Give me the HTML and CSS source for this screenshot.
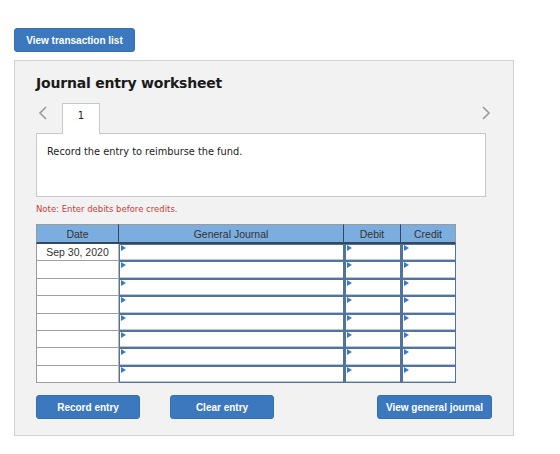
FILE: index.html
```html
<!DOCTYPE html>
<html lang="en">
<head>
    <meta charset="UTF-8">
    <meta name="viewport" content="width=device-width, initial-scale=1.0">
    <title>Journal entry worksheet</title>
    <link rel="stylesheet" href="styles.css">
</head>
<body>
    <button class="btn btn-top">View transaction list</button>

    <div class="panel">
        <h2>Journal entry worksheet</h2>

        <div class="tabs">
            <span class="arrow">
                <svg width="10" height="14" viewBox="0 0 10 14"><polyline points="8,1 2,7 8,13" fill="none" stroke="#9a9a9a" stroke-width="1.6"/></svg>
            </span>
            <span class="tab">1</span>
            <span class="arrow arrow-right">
                <svg width="10" height="14" viewBox="0 0 10 14"><polyline points="2,1 8,7 2,13" fill="none" stroke="#9a9a9a" stroke-width="1.6"/></svg>
            </span>
        </div>

        <div class="question">Record the entry to reimburse the fund.</div>

        <p class="note">Note: Enter debits before credits.</p>

        <table class="journal">
            <thead>
                <tr>
                    <th class="c-date">Date</th>
                    <th class="c-acct">General Journal</th>
                    <th class="c-dr">Debit</th>
                    <th class="c-cr">Credit</th>
                </tr>
            </thead>
            <tbody id="rows"></tbody>
        </table>

        <div class="actions">
            <button class="btn btn-action">Record entry</button>
            <button class="btn btn-action btn-clear">Clear entry</button>
            <button class="btn btn-action btn-view">View general journal</button>
        </div>
    </div>

    <script>
        // Montar as linhas da tabela
        var corpo = document.getElementById('rows');
        for (var i = 0; i < 8; i++) {
            var tr = document.createElement('tr');
            tr.innerHTML =
                '<td class="date">' + (i === 0 ? 'Sep 30, 2020' : '') + '</td>' +
                '<td class="entry"><span class="flag"></span></td>' +
                '<td class="entry"><span class="flag"></span></td>' +
                '<td class="entry"><span class="flag"></span></td>';
            corpo.appendChild(tr);
        }
    </script>
</body>
</html>
```

FILE: styles.css
```css
body {
    margin: 0;
    padding: 28px 0 0 14px;
    background: #ffffff;
    font-family: "Liberation Sans", Arial, sans-serif;
}
.btn {
    background: #3b78bd;
    color: #ffffff;
    border: 1px solid #3570b2;
    border-radius: 3px;
    font-family: "Liberation Sans", Arial, sans-serif;
    font-weight: bold;
    font-size: 10px;
    height: 24px;
    padding: 0;
    cursor: pointer;
    display: block;
}
.btn-top {
    width: 121px;
}
.panel {
    margin-top: 8px;
    width: 500px;
    height: 376px;
    box-sizing: border-box;
    background: #f2f2f2;
    border: 1px solid #d2d2d2;
    padding: 13px 28px 0 21px;
}
h2 {
    margin: 0;
    font-family: "DejaVu Sans", Verdana, sans-serif;
    font-size: 14px;
    letter-spacing: -0.2px;
    font-weight: bold;
    color: #1a1a1a;
    line-height: 18px;
}
.tabs {
    display: flex;
    align-items: center;
    margin-top: 10px;
    height: 31px;
}
.arrow {
    width: 24px;
    display: flex;
    padding-left: 2px;
    margin-top: -9px;
}
.arrow-right {
    margin-left: auto;
    width: auto;
    padding-left: 0;
    margin-right: -6px;
}
.tab {
    align-self: flex-end;
    width: 38px;
    height: 31px;
    box-sizing: border-box;
    margin-bottom: -1px;
    background: #ffffff;
    border: 1px solid #c8c8c8;
    border-bottom: none;
    position: relative;
    z-index: 1;
    text-align: center;
    font-family: "DejaVu Sans", Verdana, sans-serif;
    font-size: 10px;
    line-height: 24px;
    color: #222;
}
.question {
    width: 450px;
    height: 64px;
    box-sizing: border-box;
    background: #ffffff;
    border: 1px solid #c8c8c8;
    padding: 12px 10px;
    font-family: "DejaVu Sans", Verdana, sans-serif;
    font-size: 9.8px;
    color: #222;
}
.note {
    margin: 7px 0 0;
    font-family: "DejaVu Sans", Verdana, sans-serif;
    font-size: 8.5px;
    color: #c9403d;
    line-height: 11px;
}
.journal {
    margin-top: 9px;
    width: 420px;
    border-collapse: separate;
    border-spacing: 0;
    font-size: 10.5px;
    color: #333;
}
.journal th {
    background: #7badde;
    font-weight: normal;
    height: 17px;
    padding: 0;
    border-top: 1px solid #9a9a9a;
    border-bottom: 2px solid #35475e;
    border-right: 1px solid #35475e;
}
.journal th.c-date {
    border-left: 1px solid #9a9a9a;
    width: 81px;
}
.journal th.c-acct { width: 224px; }
.journal th.c-dr { width: 56px; }
.journal th.c-cr {
    border-right: 1px solid #9a9a9a;
}
.journal td {
    height: 15.4px;
    padding: 0;
}
.journal td.date {
    background: #ffffff;
    text-align: center;
    border-left: 1px solid #9a9a9a;
    border-bottom: 1px solid #a0a0a0;
    border-right: 1px solid #b8b8b8;
    height: 16.4px;
}
.journal td.entry {
    background: #ffffff;
    position: relative;
    border: 1px solid #52739e;
    box-shadow: inset 0 -1px 0 #b9c9dd;
}
.journal td.entry + td.entry {
    border-left: 2px solid #52739e;
}
.journal tr:last-child td.entry {
    border-bottom: 1px solid #52739e;
}
.flag {
    position: absolute;
    left: 1px;
    top: 0;
    width: 0;
    height: 0;
    border-top: 3px solid transparent;
    border-bottom: 3px solid transparent;
    border-left: 5px solid #3a79c9;
}
.actions {
    display: flex;
    margin-top: 12px;
    width: 456px;
}
.btn-action {
    width: 104px;
}
.btn-clear {
    margin-left: 30px;
}
.btn-view {
    margin-left: auto;
    width: 115px;
}
```
